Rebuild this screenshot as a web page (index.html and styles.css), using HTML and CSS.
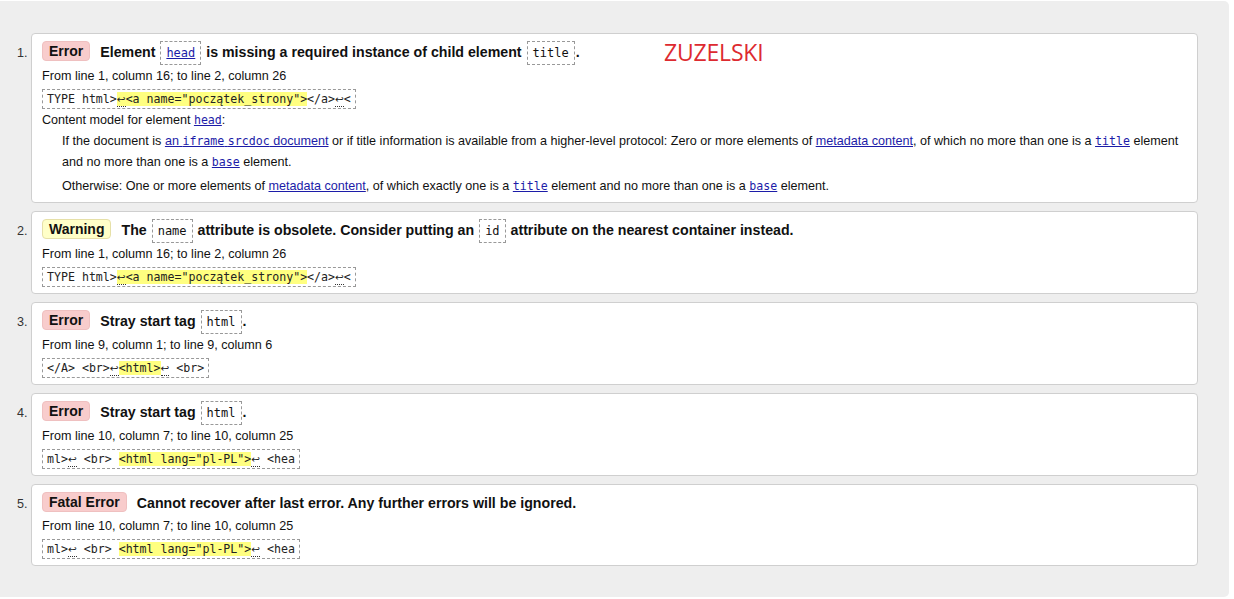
FILE: index.html
```html
<!DOCTYPE html>
<html lang="pl">
<head>
<meta charset="utf-8">
<link rel="stylesheet" href="styles.css">
</head>
<body>
<div class="panel">
  <ol class="results">
    <li class="msg">
      <p class="head"><strong class="badge error">Error</strong><span class="text">Element <code><a href="#">head</a></code> is missing a required instance of child element <code>title</code>.</span></p>
      <p class="loc">From line 1, column 16; to line 2, column 26</p>
      <p class="extract"><code>TYPE html&gt;<b><span class="lf">↩</span>&lt;a name="początek_strony"&gt;</b>&lt;/a&gt;<span class="lf">↩</span>&lt;</code></p>
      <dl class="model">
        <dt>Content model for element <code><a href="#">head</a></code>:</dt>
        <dd>
          <p>If the document is <a href="#">an <code>iframe</code> <code>srcdoc</code> document</a> or if title information is available from a higher-level protocol: Zero or more elements of <a href="#">metadata content</a>, of which no more than one is a <code><a href="#">title</a></code> element and no more than one is a <code><a href="#">base</a></code> element.</p>
          <p>Otherwise: One or more elements of <a href="#">metadata content</a>, of which exactly one is a <code><a href="#">title</a></code> element and no more than one is a <code><a href="#">base</a></code> element.</p>
        </dd>
      </dl>
    </li>
    <li class="msg">
      <p class="head"><strong class="badge warning">Warning</strong><span class="text">The <code>name</code> attribute is obsolete. Consider putting an <code>id</code> attribute on the nearest container instead.</span></p>
      <p class="loc">From line 1, column 16; to line 2, column 26</p>
      <p class="extract plain"><code>TYPE html&gt;<b><span class="lf">↩</span>&lt;a name="początek_strony"&gt;</b>&lt;/a&gt;<span class="lf">↩</span>&lt;</code></p>
    </li>
    <li class="msg">
      <p class="head"><strong class="badge error">Error</strong><span class="text">Stray start tag <code>html</code>.</span></p>
      <p class="loc">From line 9, column 1; to line 9, column 6</p>
      <p class="extract"><code>&lt;/A&gt; &lt;br&gt;<span class="lf">↩</span><b>&lt;html&gt;</b><span class="lf">↩</span> &lt;br&gt;</code></p>
    </li>
    <li class="msg">
      <p class="head"><strong class="badge error">Error</strong><span class="text">Stray start tag <code>html</code>.</span></p>
      <p class="loc">From line 10, column 7; to line 10, column 25</p>
      <p class="extract"><code>ml&gt;<span class="lf">↩</span> &lt;br&gt; <b>&lt;html lang="pl-PL"&gt;</b><span class="lf">↩</span> &lt;hea</code></p>
    </li>
    <li class="msg">
      <p class="head"><strong class="badge error">Fatal Error</strong><span class="text">Cannot recover after last error. Any further errors will be ignored.</span></p>
      <p class="loc">From line 10, column 7; to line 10, column 25</p>
      <p class="extract"><code>ml&gt;<span class="lf">↩</span> &lt;br&gt; <b>&lt;html lang="pl-PL"&gt;</b><span class="lf">↩</span> &lt;hea</code></p>
    </li>
  </ol>
  <div class="stamp">ZUZELSKI</div>
</div>
</body>
</html>
```

FILE: styles.css
```css
html, body {
  margin: 0;
  background: #fff;
}

body {
  font-family: "Liberation Sans", Arial, sans-serif;
  font-size: 12.6px;
  color: #111;
}

.panel {
  position: relative;
  margin-top: 1px;
  width: 1229px;
  height: 596px;
  box-sizing: border-box;
  padding-top: 32px;
  background: #eeeeee;
  border-radius: 0 5px 5px 0;
}

.results {
  margin: 0;
  padding: 0 0 0 31px;
  width: 1167px;
  color: #333;
}

.msg {
  background: #fff;
  border: 1px solid #cfcfcf;
  border-radius: 4px;
  padding: 6px 10px 5px 10px;
  margin-bottom: 8px;
  color: #111;
}

.msg::marker {
  color: #333;
}

.msg p {
  margin: 0;
}

.head {
  line-height: 24px;
  font-weight: bold;
  font-size: 14.2px;
}

.badge {
  display: inline-block;
  box-sizing: border-box;
  height: 20px;
  line-height: 18px;
  padding: 0 6px;
  margin-right: 10px;
  border-radius: 4px;
  border: 1px solid #efc0c0;
  vertical-align: 1px;
  font-size: 14px;
}

.badge.error {
  background: #f8cccc;
}

.badge.warning {
  background: #ffffc8;
  border-color: #e6e0a8;
}

code {
  font-family: "DejaVu Sans Mono", "Liberation Mono", monospace;
  font-size: 12px;
  font-weight: normal;
}

.head code {
  border: 1px dashed #999;
  padding: 4px 5px;
  margin: 0 1px;
}

.loc {
  line-height: 23px;
}

.extract {
  line-height: 22px;
  height: 22px;
}

.extract code {
  display: inline-block;
  vertical-align: top;
  margin-top: 1px;
  font-size: 11.6px;
  line-height: 16px;
  padding: 1px 4px;
  border: 1px dashed #999;
  white-space: pre;
  color: #222;
}

.extract b {
  font-weight: normal;
  background: #ffff80;
}

.lf {
  display: inline-block;
  font-family: "DejaVu Sans", sans-serif;
  font-size: 10.5px;
  border-bottom: 1px dotted #333;
  line-height: 13px;
}

a {
  color: #1c1ca8;
  text-decoration: underline;
}

.model {
  margin: 0;
  line-height: 21px;
}

.model dt {
  margin: 0;
}

.model dd {
  margin: 0 0 0 20px;
  line-height: 21px;
}

.model dd p {
  margin: 0 0 3px 0;
}

.model dd p:last-child {
  margin-bottom: 0;
}

.model code {
  font-size: 11.6px;
}

.stamp {
  position: absolute;
  left: 664px;
  top: 35px;
  font-family: "Open Sans", sans-serif;
  font-size: 23px;
  color: #dd2a30;
  letter-spacing: -0.2px;
}
```
